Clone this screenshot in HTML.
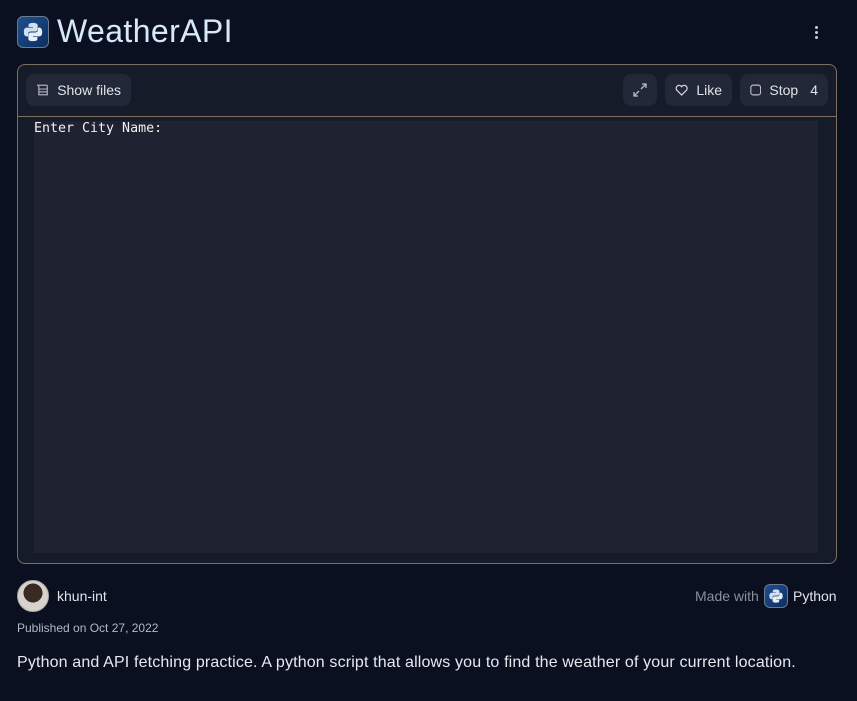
<!DOCTYPE html>
<html><head><style>
*{box-sizing:border-box;margin:0;padding:0}
body{width:857px;height:701px;background:#0b1020;font-family:"Liberation Sans",sans-serif;color:#e6e9f0;position:relative;overflow:hidden}
.abs{position:absolute;white-space:nowrap}
.pyicon{background:linear-gradient(135deg,#1f4f8f,#0b2f60);border:1px solid #6b7a8f;border-radius:6px;display:flex;align-items:center;justify-content:center}
.btn{position:absolute;white-space:nowrap;background:#232838;border-radius:8px;height:32px;top:74px;display:flex;align-items:center;font-size:14px;color:#dfe3ea;gap:8px;padding:0 10px}
</style></head><body>
<div class="abs pyicon" style="left:17px;top:16px;width:32px;height:32px">
<svg width="22" height="22" viewBox="0 0 24 24"><path d="M11.9 2c-5 0-4.7 2.2-4.7 2.2v2.3h4.8v.7H5.3S2 6.8 2 11.9s2.9 4.9 2.9 4.9h1.7v-2.4s-.1-2.9 2.9-2.9h4.8s2.8 0 2.8-2.7V4.7S17.5 2 11.9 2z" fill="#cfe0f5"/><path d="M12.1 22c5 0 4.7-2.2 4.7-2.2v-2.3H12v-.7h6.7s3.3.4 3.3-4.7-2.9-4.9-2.9-4.9h-1.7v2.4s.1 2.9-2.9 2.9H9.7s-2.8 0-2.8 2.7v4.1S6.5 22 12.1 22z" fill="#e9eef5"/></svg></div>
<div class="abs" style="left:57px;top:13px;font-size:32px;letter-spacing:0.4px;color:#d8e8fa">WeatherAPI</div>
<div class="abs" style="left:815px;top:26px;width:3px;font-size:0">
<div style="width:3px;height:3px;background:#ccc;border-radius:50%;margin-bottom:2px"></div><div style="width:3px;height:3px;background:#ccc;border-radius:50%;margin-bottom:2px"></div><div style="width:3px;height:3px;background:#ccc;border-radius:50%"></div></div>
<div class="abs" style="left:17px;top:64px;width:820px;height:500px;background:#161b29;border:1px solid #7d7060;border-radius:8px;overflow:hidden">
<div style="position:absolute;left:0;right:0;top:51px;height:1px;background:#7d7060"></div>
<div style="position:absolute;left:16px;top:56px;width:784px;height:432px;background:#1e2231"></div>
<div style="position:absolute;left:16px;top:56px;font-family:'DejaVu Sans Mono',monospace;font-size:13.3px;color:#f0f0f0">Enter City Name:</div>
</div>
<div class="btn" style="left:26px;width:105px"><svg width="14" height="14" viewBox="0 0 14 14" fill="none" stroke="#aab" stroke-width="1.3"><path d="M1 2h11M3 2v10h9V2M3 6h9M3 9h9"/></svg>Show files</div>
<div class="btn" style="left:623px;width:34px;padding:0;justify-content:center"><svg width="14" height="14" viewBox="0 0 14 14" fill="none" stroke="#bbc" stroke-width="1.3"><path d="M8 6l5-5M9 1h4v4M6 8l-5 5M1 9v4h4"/></svg></div>
<div class="btn" style="left:665px;width:67px"><svg width="16" height="14" viewBox="0 0 16 14" fill="none" stroke="#dde" stroke-width="1.4"><path d="M8 13L2 7a3.3 3.3 0 0 1 6-4 3.3 3.3 0 0 1 6 4z"/></svg>Like</div>
<div class="btn" style="left:740px;width:88px"><svg width="14" height="14" viewBox="0 0 14 14" fill="none" stroke="#bbc" stroke-width="1.4"><rect x="1" y="1" width="12" height="12" rx="3"/></svg>Stop<span style="margin-left:4px">4</span></div>
<div class="abs" style="left:17px;top:580px;width:32px;height:32px;border-radius:50%;background:radial-gradient(circle at 50% 40%,#3a2a25 0 40%,#d8d2cc 41%);border:1px solid #aaa"></div>
<div class="abs" style="left:57px;top:588px;font-size:14px;color:#dfe3ea">khun-int</div>
<div class="abs" style="left:695px;top:588px;font-size:14px;color:#8a8f9c">Made with</div>
<div class="abs pyicon" style="left:764px;top:584px;width:24px;height:24px"><svg width="16" height="16" viewBox="0 0 24 24"><path d="M11.9 2c-5 0-4.7 2.2-4.7 2.2v2.3h4.8v.7H5.3S2 6.8 2 11.9s2.9 4.9 2.9 4.9h1.7v-2.4s-.1-2.9 2.9-2.9h4.8s2.8 0 2.8-2.7V4.7S17.5 2 11.9 2z" fill="#cfe0f5"/><path d="M12.1 22c5 0 4.7-2.2 4.7-2.2v-2.3H12v-.7h6.7s3.3.4 3.3-4.7-2.9-4.9-2.9-4.9h-1.7v2.4s.1 2.9-2.9 2.9H9.7s-2.8 0-2.8 2.7v4.1S6.5 22 12.1 22z" fill="#e9eef5"/></svg></div>
<div class="abs" style="left:793px;top:588px;font-size:14px;color:#dfe3ea">Python</div>
<div class="abs" style="left:17px;top:621px;font-size:12px;color:#b4b9c4">Published on Oct 27, 2022</div>
<div class="abs" style="left:17px;top:654px;font-size:16px;letter-spacing:0.15px;color:#e6e9f0">Python and API fetching practice. A python script that allows you to find the weather of your current location.</div>
</body></html>
